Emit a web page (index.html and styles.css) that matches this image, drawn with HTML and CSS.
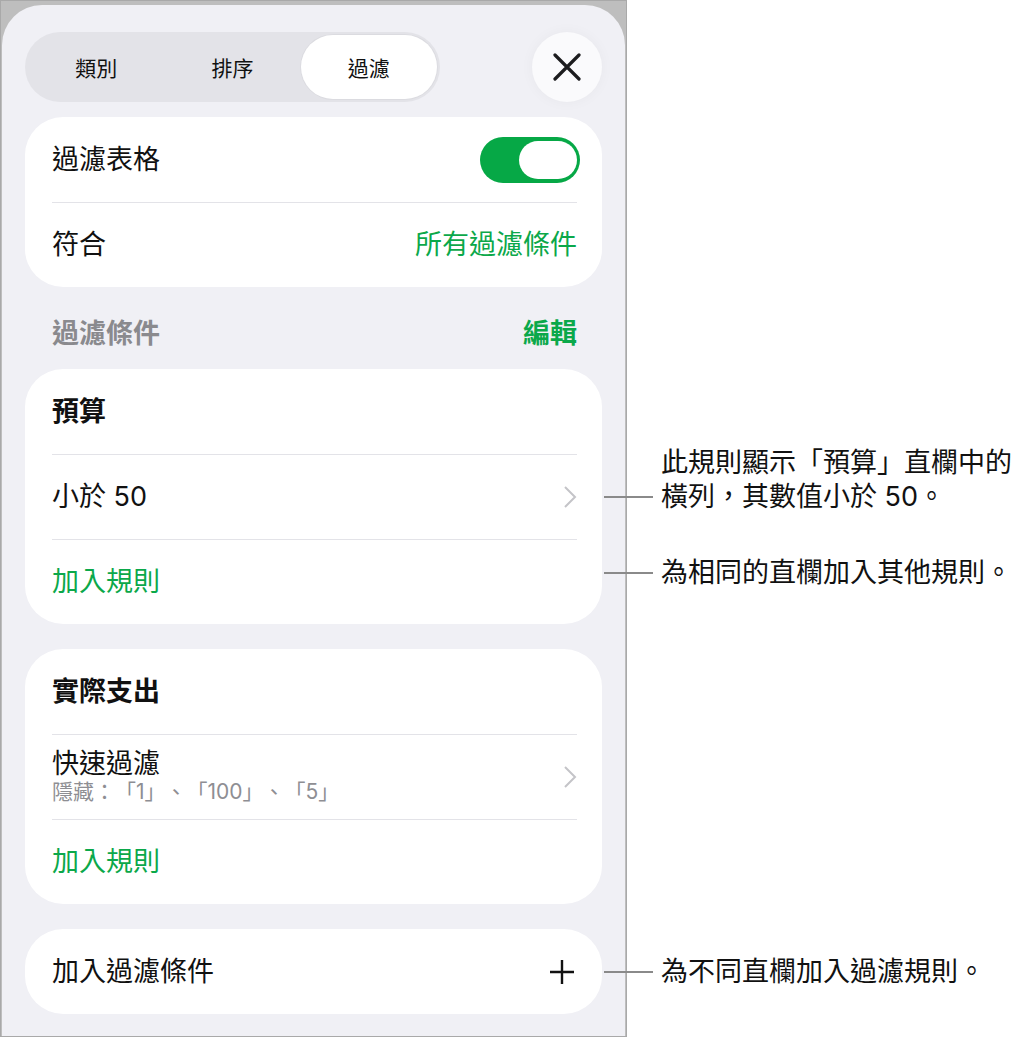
FILE: index.html
```html
<!DOCTYPE html>
<html lang="zh-Hant">
<head>
  <meta charset="UTF-8" />
  <title>過濾</title>
  <link rel="stylesheet" href="styles.css">
</head>
<body>
  <div class="frame">
    <div class="sheet">

      <div class="toolbar">
        <div class="segmented">
          <span class="segment">類別</span>
          <span class="segment">排序</span>
          <span class="segment active">過濾</span>
        </div>
        <button class="close" aria-label="關閉">
          <svg width="28" height="28" viewBox="0 0 28 28">
            <path d="M2 2 L26 26 M26 2 L2 26" />
          </svg>
        </button>
      </div>

      <div class="card">
        <div class="row">
          <span>過濾表格</span>
          <span class="toggle"><span class="thumb"></span></span>
        </div>
        <div class="row">
          <span>符合</span>
          <span class="green">所有過濾條件</span>
        </div>
      </div>

      <div class="section-header">
        <span>過濾條件</span>
        <span class="edit">編輯</span>
      </div>

      <div class="card">
        <div class="row title">預算</div>
        <div class="row">
          <span>小於 50</span>
          <svg class="chevron" width="14" height="24" viewBox="0 0 14 24"><path d="M2 2 L12 12 L2 22" /></svg>
          <div class="callout callout-two">
            <i class="leader"></i>
            <p>此規則顯示「預算」直欄中的<br>橫列，其數值小於 50。</p>
          </div>
        </div>
        <div class="row">
          <span class="green">加入規則</span>
          <div class="callout callout-up">
            <i class="leader"></i>
            <p>為相同的直欄加入其他規則。</p>
          </div>
        </div>
      </div>

      <div class="card">
        <div class="row title">實際支出</div>
        <div class="row">
          <div class="stack">
            <span>快速過濾</span>
            <span class="sub">隱藏：「1」、「100」、「5」</span>
          </div>
          <svg class="chevron" width="14" height="24" viewBox="0 0 14 24"><path d="M2 2 L12 12 L2 22" /></svg>
        </div>
        <div class="row">
          <span class="green">加入規則</span>
        </div>
      </div>

      <div class="card">
        <div class="row">
          <span>加入過濾條件</span>
          <svg class="plus" width="26" height="26" viewBox="0 0 26 26"><path d="M13 1 V25 M1 13 H25" /></svg>
          <div class="callout">
            <i class="leader"></i>
            <p>為不同直欄加入過濾規則。</p>
          </div>
        </div>
      </div>

    </div>
  </div>
</body>
</html>
```

FILE: styles.css
```css
body {
  margin: 0;
  background: #fff;
  font-family: Inter, "Noto Sans CJK TC", sans-serif;
  color: #111;
  text-spacing-trim: space-all;
}

.frame {
  width: 625px;
  height: 1035px;
  display: flex;
  flex-direction: column;
  background: #bebebe;
  border: 1px solid #a9a9a9;
}

.sheet {
  flex: 1;
  margin: 4px 1px 0;
  padding: 0 23px;
  background: #f0f0f5;
  border-radius: 40px 40px 0 0;
}

/* top bar */
.toolbar {
  margin-top: 27px;
  height: 70px;
  display: flex;
  justify-content: space-between;
  align-items: center;
}

.segmented {
  width: 409px;
  height: 64px;
  padding: 3px;
  display: flex;
  background: #e3e3e8;
  border-radius: 35px;
}

.segment {
  flex: 1;
  display: flex;
  align-items: center;
  justify-content: center;
  font-size: 21px;
  font-weight: 400;
  color: #111;
  border-radius: 32px;
}

.segment.active {
  background: #fff;
  box-shadow: 0 0 0 1px rgba(0,0,0,0.03);
}

.close {
  width: 70px;
  height: 70px;
  padding: 0;
  border: none;
  border-radius: 50%;
  background: #fafafc;
  box-shadow: 0 0 14px rgba(0,0,0,0.04);
  display: flex;
  align-items: center;
  justify-content: center;
}

.close path {
  stroke: #1c1c1e;
  stroke-width: 3.2;
  stroke-linecap: round;
  fill: none;
}

/* grouped lists */
.card {
  position: relative;
  background: #fff;
  border-radius: 38px;
  margin-top: 25px;
}

.toolbar + .card { margin-top: 15px; }
.section-header + .card { margin-top: 0; }

.row {
  position: relative;
  box-sizing: border-box;
  height: 85px;
  margin: 0 25px 0 27px;
  display: flex;
  align-items: center;
  justify-content: space-between;
  font-size: 27px;
  line-height: 34px;
}

.row + .row { border-top: 1px solid #e3e3e8; }

.row.title { font-weight: 700; }

.green { color: #0ba84a; }

.stack {
  display: flex;
  flex-direction: column;
}

.stack span { line-height: 30px; }

.stack .sub {
  font-size: 21px;
  line-height: 26px;
  color: #8e8e93;
}

.chevron path {
  stroke: #c4c4c8;
  stroke-width: 2;
  fill: none;
}

.plus { margin-right: 2px; }

.plus path {
  stroke: #111;
  stroke-width: 2.4;
  fill: none;
}

.toggle {
  box-sizing: border-box;
  width: 100px;
  height: 46px;
  padding: 4px 3px;
  display: flex;
  justify-content: flex-end;
  background: #06a846;
  border-radius: 23px;
  margin-right: -3px;
}

.thumb {
  width: 58px;
  height: 38px;
  background: #fff;
  border-radius: 19px;
}

.section-header {
  height: 82px;
  box-sizing: border-box;
  padding: 0 25px 18px 27px;
  display: flex;
  align-items: flex-end;
  justify-content: space-between;
  font-size: 27px;
  line-height: 34px;
  font-weight: 700;
  color: #8a8a8e;
}

.section-header .edit { color: #0ba84a; }

/* side notes */
.callout {
  position: absolute;
  left: calc(100% + 27px);
  top: 50%;
  transform: translateY(-50%);
  display: flex;
  align-items: center;
  white-space: nowrap;
}

.callout p {
  margin: 0;
  font-size: 27px;
  line-height: 34px;
  color: #111;
}

.leader {
  width: 49px;
  height: 2px;
  margin-right: 8px;
  background: #8a8a8a;
}

.callout-two {
  top: auto;
  bottom: calc(50% - 17px);
  transform: none;
  align-items: flex-end;
}

.callout-two .leader { margin-bottom: 16px; }

.callout-up { transform: translateY(calc(-50% - 9px)); }
```
